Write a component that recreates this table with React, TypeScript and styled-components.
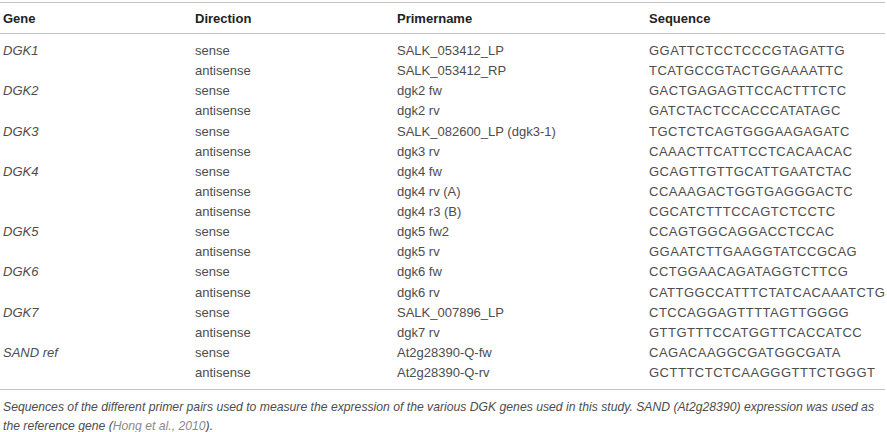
import React from "react";
import styled, { createGlobalStyle } from "styled-components";

const GlobalStyle = createGlobalStyle`
  html, body {
    margin: 0;
    padding: 0;
    background: #ffffff;
  }
  body {
    font-family: "Liberation Sans", Arial, sans-serif;
  }
`;

const Wrapper = styled.div`
  width: 887px;
  padding-top: 2px;
`;

const Table = styled.table`
  width: 885px;
  table-layout: fixed;
  border-collapse: collapse;
  border-top: 1px solid #c4c4c4;
  border-bottom: 1px solid #c4c4c4;
  font-size: 13px;
  color: #4d4d4d;

  th,
  td {
    box-sizing: border-box;
    padding: 0;
  }
  th:first-child,
  td:first-child {
    padding-left: 3px;
  }
`;

const HeadCell = styled.th<{ $width: number }>`
  width: ${(p) => p.$width}px;
  text-align: left;
  font-weight: bold;
  color: #222;
  height: 31px;
  border-bottom: 1px solid #c4c4c4;
`;

const Row = styled.tr`
  &:first-child td {
    padding-top: 7px;
  }
  &:last-child td {
    padding-bottom: 6px;
  }
`;

const Cell = styled.td<{ $italic?: boolean; $seq?: boolean }>`
  height: 20.13px;
  line-height: 20.13px;
  white-space: nowrap;
  font-style: ${(p) => (p.$italic ? "italic" : "normal")};
  letter-spacing: ${(p) => (p.$seq ? "0.5px" : "normal")};
`;

const Caption = styled.p`
  margin: 0;
  padding: 8px 0 0 3px;
  width: 882px;
  font-size: 12.2px;
  line-height: 19px;
  font-style: italic;
  color: #4d4d4d;
`;

const Ref = styled.span`
  color: #8a8a8a;
`;

type Primer = { gene?: string; dir: string; name: string; seq: string };

const rows: Primer[] = [
  { gene: "DGK1", dir: "sense", name: "SALK_053412_LP", seq: "GGATTCTCCTCCCGTAGATTG" },
  { dir: "antisense", name: "SALK_053412_RP", seq: "TCATGCCGTACTGGAAAATTC" },
  { gene: "DGK2", dir: "sense", name: "dgk2 fw", seq: "GACTGAGAGTTCCACTTTCTC" },
  { dir: "antisense", name: "dgk2 rv", seq: "GATCTACTCCACCCATATAGC" },
  { gene: "DGK3", dir: "sense", name: "SALK_082600_LP (dgk3-1)", seq: "TGCTCTCAGTGGGAAGAGATC" },
  { dir: "antisense", name: "dgk3 rv", seq: "CAAACTTCATTCCTCACAACAC" },
  { gene: "DGK4", dir: "sense", name: "dgk4 fw", seq: "GCAGTTGTTGCATTGAATCTAC" },
  { dir: "antisense", name: "dgk4 rv (A)", seq: "CCAAAGACTGGTGAGGGACTC" },
  { dir: "antisense", name: "dgk4 r3 (B)", seq: "CGCATCTTTCCAGTCTCCTC" },
  { gene: "DGK5", dir: "sense", name: "dgk5 fw2", seq: "CCAGTGGCAGGACCTCCAC" },
  { dir: "antisense", name: "dgk5 rv", seq: "GGAATCTTGAAGGTATCCGCAG" },
  { gene: "DGK6", dir: "sense", name: "dgk6 fw", seq: "CCTGGAACAGATAGGTCTTCG" },
  { dir: "antisense", name: "dgk6 rv", seq: "CATTGGCCATTTCTATCACAAATCTG" },
  { gene: "DGK7", dir: "sense", name: "SALK_007896_LP", seq: "CTCCAGGAGTTTTAGTTGGGG" },
  { dir: "antisense", name: "dgk7 rv", seq: "GTTGTTTCCATGGTTCACCATCC" },
  { gene: "SAND ref", dir: "sense", name: "At2g28390-Q-fw", seq: "CAGACAAGGCGATGGCGATA" },
  { dir: "antisense", name: "At2g28390-Q-rv", seq: "GCTTTCTCTCAAGGGTTTCTGGGT" },
];

export default function App() {
  return (
    <Wrapper>
      <GlobalStyle />
      <Table>
        <thead>
          <tr>
            <HeadCell $width={195}>Gene</HeadCell>
            <HeadCell $width={202}>Direction</HeadCell>
            <HeadCell $width={252}>Primername</HeadCell>
            <HeadCell $width={236}>Sequence</HeadCell>
          </tr>
        </thead>
        <tbody>
          {rows.map((r, i) => (
            <Row key={i}>
              <Cell $italic>{r.gene ?? ""}</Cell>
              <Cell>{r.dir}</Cell>
              <Cell>{r.name}</Cell>
              <Cell $seq>{r.seq}</Cell>
            </Row>
          ))}
        </tbody>
      </Table>
      <Caption>
        Sequences of the different primer pairs used to measure the expression of the various DGK
        genes used in this study. SAND (At2g28390) expression was used as the reference gene (
        <Ref>Hong et al., 2010</Ref>).
      </Caption>
    </Wrapper>
  );
}
